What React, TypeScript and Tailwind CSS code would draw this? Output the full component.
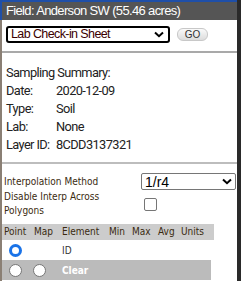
import React from "react";

export default function App() {
  return (
    <div className="w-[241px] h-[281px] overflow-hidden bg-[#8a7f74] relative">
      <div className="absolute left-0 top-0 w-[241px] h-[2px] bg-[#1f4fa8]" />
      <div className="absolute left-0 top-0 w-[2px] h-[20px] bg-[#1f4fa8]" />
      <div className="absolute right-0 top-0 w-[4px] h-[281px] bg-[#2a2a2a]" />
      <div className="ml-[2px] mt-[2px] w-[235px] h-[279px] bg-white flex flex-col">
        <div className="h-[18px] bg-[#555555] text-white text-[13px] leading-[18px] pl-[4px] tracking-[-0.65px] font-['Liberation_Sans',Arial,sans-serif]">
          Field: Anderson SW (55.46 acres)
        </div>
        <div className="flex items-center mt-[6px] pl-[4px]">
          <div className="w-[164px] h-[17px] border-2 border-black rounded-[3px] flex items-center justify-between px-[3px] font-['Liberation_Sans',Arial,sans-serif] text-[12.5px] tracking-[-0.6px] text-[#3b0000]">
            <span className="leading-none">Lab Check-in Sheet</span>
            <svg width="10" height="7" viewBox="0 0 10 7" className="mr-[1px]">
              <path d="M1 1.5 L5 5.2 L9 1.5" stroke="#000" strokeWidth="2" fill="none" />
            </svg>
          </div>
          <div className="ml-[7px] w-[31px] h-[13px] rounded-[6px] border border-[#c8c8c8] bg-gradient-to-b from-[#fafafa] to-[#dcdcdc] flex items-center justify-center text-[10px] leading-none text-[#333] font-['Liberation_Sans',Arial,sans-serif]">
            GO
          </div>
        </div>
        <div className="mt-[8px] h-[2px] bg-[#a9a9a9] mx-0" />
        <div className="pl-[4px] pt-[11px] font-['Roboto',sans-serif] text-[12.8px] text-[#222] leading-[18px] tracking-[-0.6px]">
          <div>Sampling Summary:</div>
          <div className="flex"><span className="w-[50px]">Date:</span><span>2020-12-09</span></div>
          <div className="flex"><span className="w-[50px]">Type:</span><span>Soil</span></div>
          <div className="flex"><span className="w-[50px]">Lab:</span><span>None</span></div>
          <div className="flex"><span className="w-[50px]">Layer ID:</span><span>8CDD3137321</span></div>
        </div>
        <div className="mt-[8px] h-[2px] bg-[#bdbdbd]" />
        <div className="font-['DejaVu_Sans_Condensed','DejaVu_Sans',sans-serif] font-stretch-condensed text-[10px] text-[#3a2a10]">
          <div className="flex items-center justify-between mt-[9px] pl-[2px] pr-[1px]">
            <span>Interpolation Method</span>
            <div className="w-[95px] h-[17px] border border-[#767676] rounded-[2px] flex items-center justify-between px-[3px] font-['Liberation_Sans',Arial,sans-serif] text-[14px] text-black">
              <span className="leading-none">1/r4</span>
              <svg width="10" height="7" viewBox="0 0 10 7">
                <path d="M1 1.5 L5 5.2 L9 1.5" stroke="#000" strokeWidth="2" fill="none" />
              </svg>
            </div>
          </div>
          <div className="flex items-center pl-[2px] mt-0">
            <div className="w-[140px] leading-[14px]">
              Disable Interp Across<br />Polygons
            </div>
            <div className="w-[13px] h-[13px] border border-[#767676] rounded-[2px] bg-white" />
          </div>
          <div className="mt-[6px] w-[212px] h-[16px] bg-[#cccccc] flex items-center pl-[2px] leading-none">
            <span className="w-[30px]">Point</span>
            <span className="w-[28px]">Map</span>
            <span className="w-[47px]">Element</span>
            <span className="w-[23px]">Min</span>
            <span className="w-[26px]">Max</span>
            <span className="w-[23px]">Avg</span>
            <span>Units</span>
          </div>
          <div className="h-[20px] flex items-center">
            <div className="w-[26px] flex justify-center">
              <div className="w-[13px] h-[13px] rounded-full border-[3.5px] border-[#1a73e8] bg-white" />
            </div>
            <div className="w-[32px]" />
            <span className="pl-[2px] text-[#333]">ID</span>
          </div>
          <div className="w-[209px] h-[20px] bg-[#bbbbbb] flex items-center">
            <div className="w-[26px] flex justify-center">
              <div className="w-[13px] h-[13px] rounded-full border border-[#767676] bg-white" />
            </div>
            <div className="w-[32px] flex justify-start pl-[5px]">
              <div className="w-[13px] h-[13px] rounded-full border border-[#767676] bg-white" />
            </div>
            <span className="pl-[2px] text-white font-bold">Clear</span>
          </div>
        </div>
      </div>
    </div>
  );
}
